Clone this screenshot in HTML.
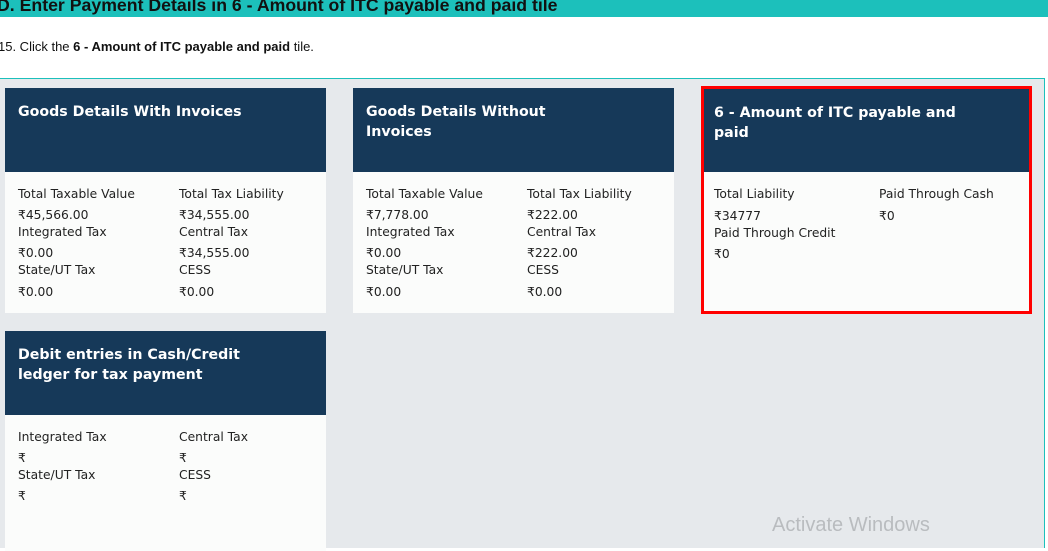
<!DOCTYPE html>
<html><head><style>
*{margin:0;padding:0;box-sizing:border-box}
body{width:1048px;height:543px;overflow:hidden;background:#fff;position:relative;font-family:"DejaVu Sans","Liberation Sans",sans-serif}
.bar{position:absolute;left:0;top:0;width:1048px;height:17px;background:#1cc0bb}
.bar span{position:absolute;left:-3px;top:-5px;font:bold 17.7px "Liberation Sans",sans-serif;color:#111;white-space:nowrap}
.step{position:absolute;left:-2px;top:39px;font:13px "Liberation Sans",sans-serif;color:#111}
.panel{position:absolute;left:0;top:78px;width:1045px;height:470px;background:#e6e9ec;border-top:1px solid #1cc0bb;border-right:1px solid #1cc0bb}
.card{position:absolute;width:321px;background:#fbfcfb}
.hd{height:84px;background:#163959;color:#fff;font-weight:bold;font-size:14.2px;line-height:20px;padding:14px 13px 0}
.t{position:absolute;font-size:12.3px;color:#222;white-space:nowrap}
.red{border:3px solid #f00}
.aw{position:absolute;left:772px;top:514px;font:20px "Liberation Sans",sans-serif;color:#b9bcbf}
</style></head><body>
<div class="bar"><span>D. Enter Payment Details in 6 - Amount of ITC payable and paid tile</span></div>
<div class="step">15. Click the <b>6 - Amount of ITC payable and paid</b> tile.</div>
<div class="panel"></div>

<div class="card" style="left:5px;top:88px;height:225px"><div class="hd">Goods Details With Invoices</div>
<div class="t" style="left:13px;top:99px">Total Taxable Value</div><div class="t" style="left:174px;top:99px">Total Tax Liability</div>
<div class="t" style="left:13px;top:120px">₹45,566.00</div><div class="t" style="left:174px;top:120px">₹34,555.00</div>
<div class="t" style="left:13px;top:137px">Integrated Tax</div><div class="t" style="left:174px;top:137px">Central Tax</div>
<div class="t" style="left:13px;top:158px">₹0.00</div><div class="t" style="left:174px;top:158px">₹34,555.00</div>
<div class="t" style="left:13px;top:175px">State/UT Tax</div><div class="t" style="left:174px;top:175px">CESS</div>
<div class="t" style="left:13px;top:197px">₹0.00</div><div class="t" style="left:174px;top:197px">₹0.00</div>
</div>

<div class="card" style="left:353px;top:88px;height:225px"><div class="hd">Goods Details Without<br>Invoices</div>
<div class="t" style="left:13px;top:99px">Total Taxable Value</div><div class="t" style="left:174px;top:99px">Total Tax Liability</div>
<div class="t" style="left:13px;top:120px">₹7,778.00</div><div class="t" style="left:174px;top:120px">₹222.00</div>
<div class="t" style="left:13px;top:137px">Integrated Tax</div><div class="t" style="left:174px;top:137px">Central Tax</div>
<div class="t" style="left:13px;top:158px">₹0.00</div><div class="t" style="left:174px;top:158px">₹222.00</div>
<div class="t" style="left:13px;top:175px">State/UT Tax</div><div class="t" style="left:174px;top:175px">CESS</div>
<div class="t" style="left:13px;top:197px">₹0.00</div><div class="t" style="left:174px;top:197px">₹0.00</div>
</div>

<div class="card red" style="left:701px;top:86px;width:331px;height:228px"><div class="hd" style="height:83px;padding:14px 10px 0">6 - Amount of ITC payable and<br>paid</div>
<div class="t" style="left:10px;top:98px">Total Liability</div><div class="t" style="left:175px;top:98px">Paid Through Cash</div>
<div class="t" style="left:10px;top:120px">₹34777</div><div class="t" style="left:175px;top:120px">₹0</div>
<div class="t" style="left:10px;top:137px">Paid Through Credit</div>
<div class="t" style="left:10px;top:158px">₹0</div>
</div>

<div class="card" style="left:5px;top:331px;height:220px"><div class="hd">Debit entries in Cash/Credit<br>ledger for tax payment</div>
<div class="t" style="left:13px;top:99px">Integrated Tax</div><div class="t" style="left:174px;top:99px">Central Tax</div>
<div class="t" style="left:13px;top:120px">₹</div><div class="t" style="left:174px;top:120px">₹</div>
<div class="t" style="left:13px;top:137px">State/UT Tax</div><div class="t" style="left:174px;top:137px">CESS</div>
<div class="t" style="left:13px;top:158px">₹</div><div class="t" style="left:174px;top:158px">₹</div>
</div>
<div class="aw">Activate Windows</div>
</body></html>
